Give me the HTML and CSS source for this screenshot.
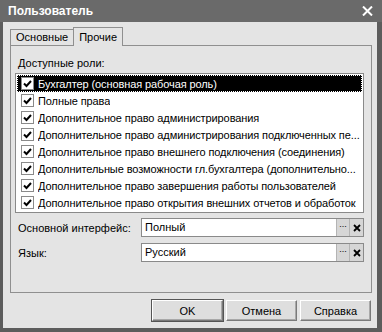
FILE: index.html
```html
<!DOCTYPE html>
<html lang="ru">
<head>
  <meta charset="UTF-8">
  <title>Пользователь</title>
  <link rel="stylesheet" href="styles.css">
</head>
<body>
  <div class="window">
    <div class="titlebar">
      <span class="title">Пользователь</span>
      <span class="close">
        <svg width="11" height="10" viewBox="0 0 11 10"><path d="M1 0.5 L10 9.5 M10 0.5 L1 9.5" stroke="#fff" stroke-width="2"/></svg>
      </span>
    </div>

    <div class="frame">
      <div class="tabs">
        <div class="tab">Основные</div>
        <div class="tab active">Прочие</div>
      </div>

      <div class="panel">
        <div class="caption">Доступные роли:</div>
        <div class="list" id="roles"></div>

        <div class="field-row">
          <label>Основной интерфейс:</label>
          <div class="field">
            <span class="value">Полный</span>
            <span class="fbtn dots">...</span>
            <span class="fbtn clear">
              <svg width="8" height="8" viewBox="0 0 8 8"><path d="M1 1 L7 7 M7 1 L1 7" stroke="#000" stroke-width="1.8"/></svg>
            </span>
          </div>
        </div>
        <div class="field-row">
          <label>Язык:</label>
          <div class="field">
            <span class="value">Русский</span>
            <span class="fbtn dots">...</span>
            <span class="fbtn clear">
              <svg width="8" height="8" viewBox="0 0 8 8"><path d="M1 1 L7 7 M7 1 L1 7" stroke="#000" stroke-width="1.8"/></svg>
            </span>
          </div>
        </div>
      </div>

      <div class="buttons">
        <button class="btn default">OK</button>
        <button class="btn">Отмена</button>
        <button class="btn">Справка</button>
      </div>
    </div>
  </div>

  <script>
    const roles = [
      'Бухгалтер (основная рабочая роль)',
      'Полные права',
      'Дополнительное право администрирования',
      'Дополнительное право администрирования подключенных пе...',
      'Дополнительное право внешнего подключения (соединения)',
      'Дополнительные возможности гл.бухгалтера (дополнительно...',
      'Дополнительное право завершения работы пользователей',
      'Дополнительное право открытия внешних отчетов и обработок'
    ];
    const check = '<svg width="9" height="8" viewBox="0 0 9 8"><path d="M1 3.5 L3.5 6 L8 1" stroke="#000" stroke-width="2" fill="none"/></svg>';
    const list = document.getElementById('roles');
    roles.forEach((r, i) => {
      const row = document.createElement('div');
      row.className = i === 0 ? 'row selected' : 'row';
      row.innerHTML = `<span class="box">${check}</span><span class="text">${r}</span>`;
      list.appendChild(row);
    });
  </script>
</body>
</html>
```

FILE: styles.css
```css
body {
  margin: 0;
  font-family: 'Liberation Sans', Arial, sans-serif;
  font-size: 11px;
  color: #000;
}
.window {
  width: 382px;
  height: 332px;
  display: flex;
  flex-direction: column;
  background: #e4e4e4;
}
.titlebar {
  height: 22px;
  background: #6a6a6a;
  display: flex;
  align-items: center;
  justify-content: space-between;
  padding: 0 8px;
  color: #fff;
  font-weight: bold;
  font-size: 12px;
}
.close {
  display: flex;
  margin-right: 1px;
}
.frame {
  flex: 1;
  display: flex;
  flex-direction: column;
  border: solid #5c5c5c;
  border-width: 0 5px 4px 3px;
}
.tabs {
  display: flex;
  align-items: flex-end;
  padding-left: 7px;
  margin-top: 6px;
  height: 17px;
}
.tab {
  height: 15px;
  line-height: 15px;
  padding: 0 5px;
  border: 1px solid #8f8f8f;
  border-bottom: none;
  background: #e4e4e4;
}
.tab.active {
  height: 18px;
  line-height: 19px;
  margin-left: -1px;
  position: relative;
  z-index: 1;
  margin-bottom: -1px;
}
.panel {
  margin: 0 5px 0 7px;
  height: 248px;
  border: 1px solid #8f8f8f;
  padding: 10px 7px 0 4px;
  box-sizing: border-box;
}
.caption {
  height: 14px;
  line-height: 14px;
  padding-left: 3px;
  margin-bottom: 3px;
}
.list {
  background: #fff;
  border: 1px solid #8a8a8a;
  padding: 1px;
  height: 136px;
  letter-spacing: -0.1px;
}
.row {
  height: 17px;
  display: flex;
  align-items: center;
  padding-left: 4px;
  white-space: nowrap;
  overflow: hidden;
}
.row.selected {
  background: #000;
  color: #fff;
  outline: 1px dotted #fff;
  outline-offset: -1px;
}
.box {
  width: 11px;
  height: 11px;
  border: 1px solid #8a8a8a;
  background: #fff;
  display: flex;
  align-items: center;
  justify-content: center;
  margin-right: 4px;
  flex: none;
}
.text {
  overflow: hidden;
  text-overflow: ellipsis;
}
.field-row {
  display: flex;
  align-items: center;
  margin-top: 5px;
}
.field-row + .field-row {
  margin-top: 6px;
}
.field-row label {
  width: 123px;
  padding-left: 3px;
}
.field {
  flex: 1;
  height: 19px;
  box-sizing: border-box;
  border: 1px solid #8a8a8a;
  background: #fff;
  display: flex;
}
.value {
  flex: 1;
  padding-left: 3px;
  line-height: 17px;
}
.fbtn {
  width: 13px;
  background: #d6d6d6;
  border-left: 1px solid #b4b4b4;
  display: flex;
  align-items: center;
  justify-content: center;
}
.dots {
  font-size: 9px;
  line-height: 17px;
  align-items: flex-end;
  padding-bottom: 3px;
  box-sizing: border-box;
}
.buttons {
  display: flex;
  justify-content: flex-end;
  gap: 3px;
  padding: 7px 6px 0 0;
}
.btn {
  width: 71px;
  height: 21px;
  font-family: inherit;
  font-size: 11px;
  background: #dedede;
  border: 1px solid;
  border-color: #fff #7a7a7a #7a7a7a #fff;
  box-shadow: inset -1px -1px 0 #a8a8a8;
  padding: 0;
}
.btn.default {
  outline: 1px solid #555;
  outline-offset: 0;
}
```
